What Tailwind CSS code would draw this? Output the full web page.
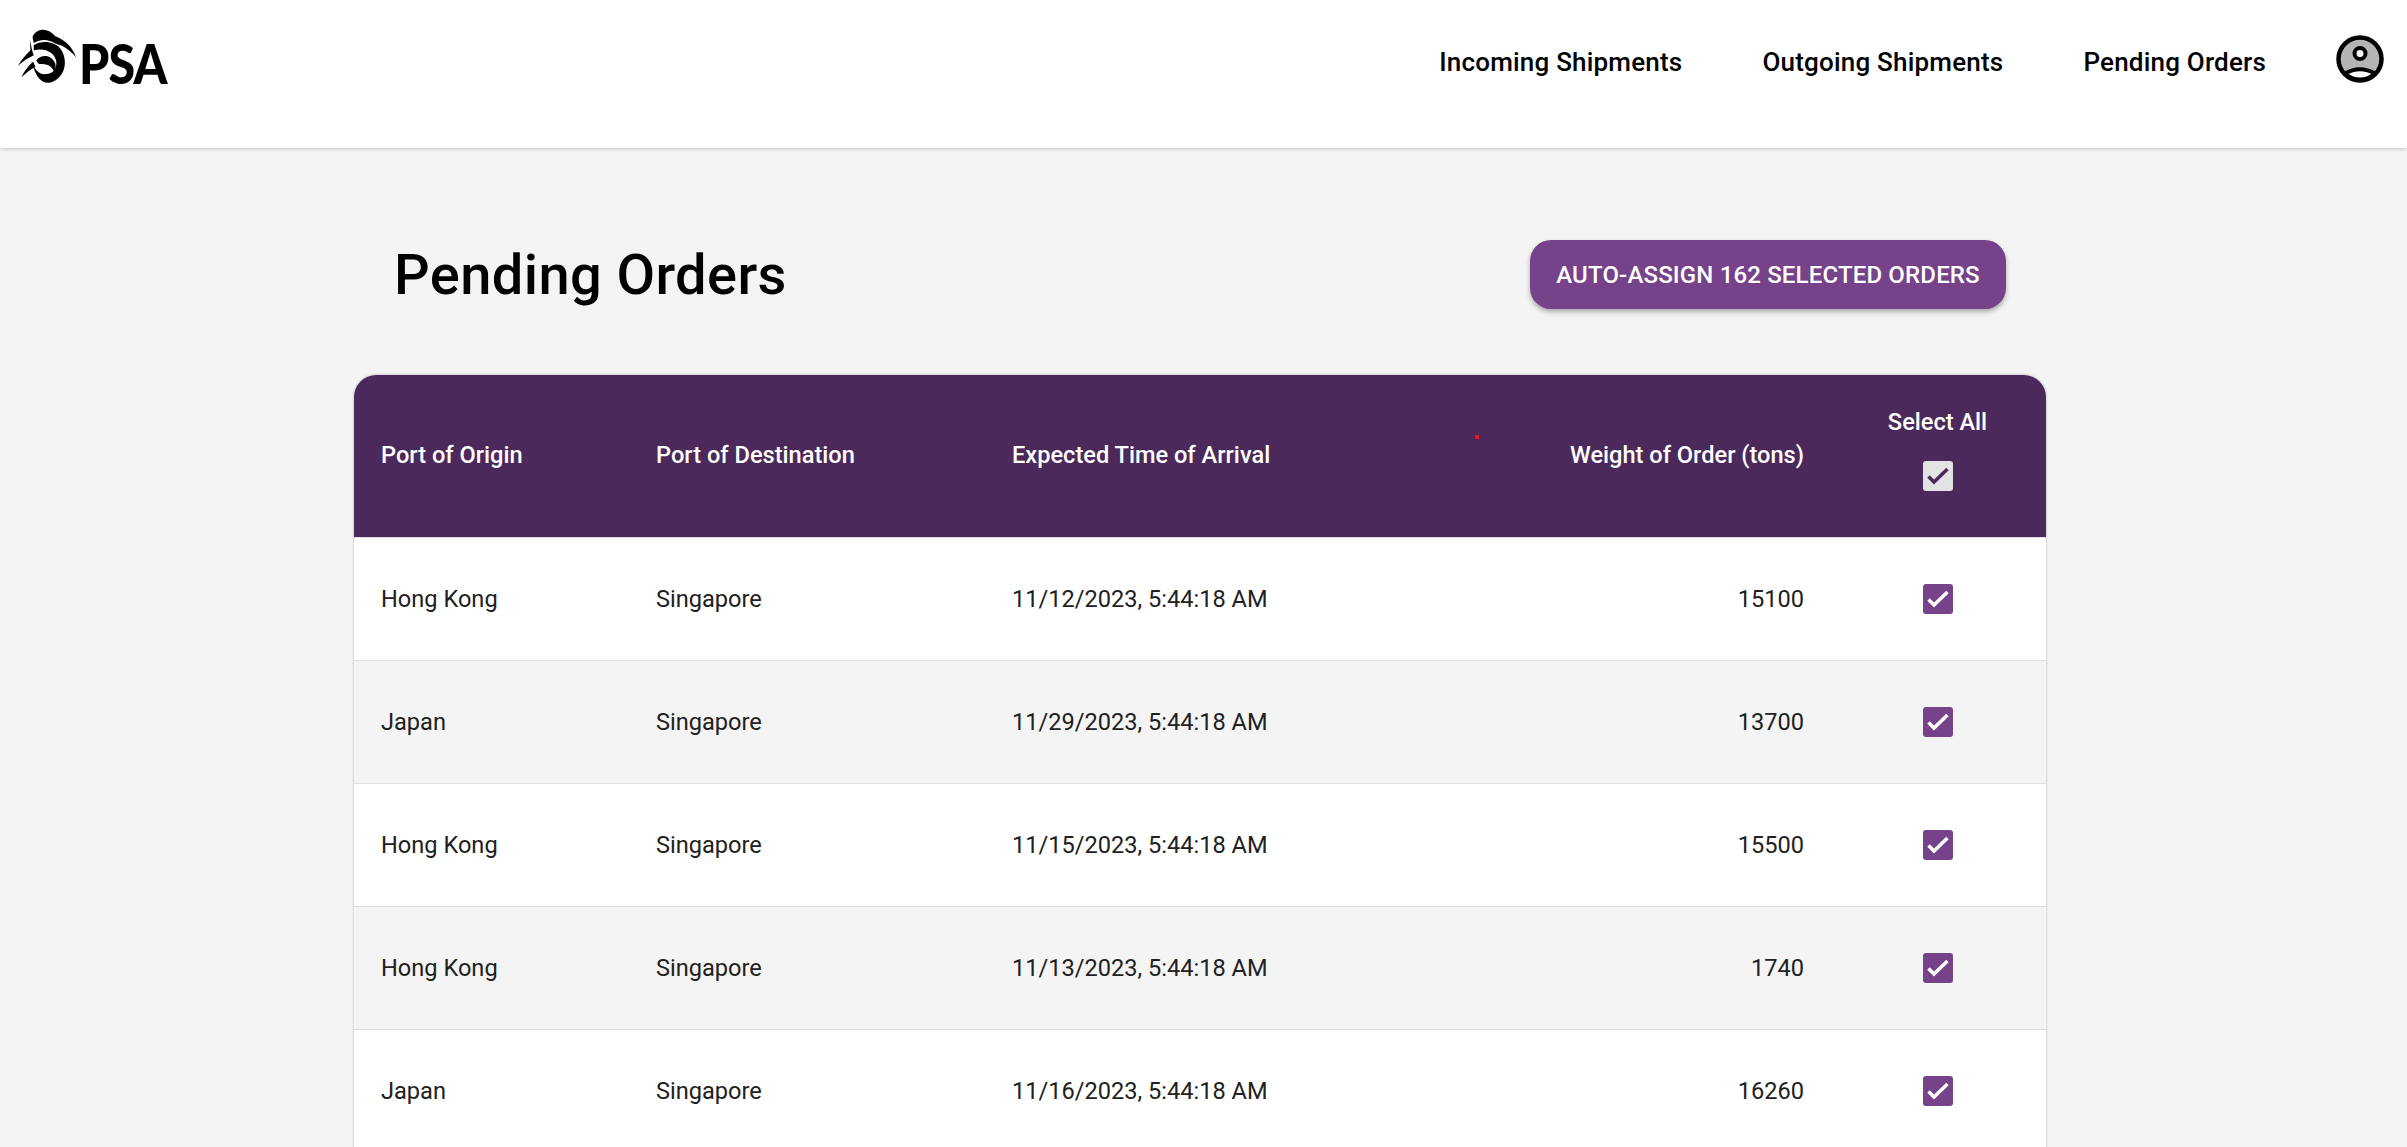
<!DOCTYPE html>
<html lang="en">
 <head>
  <meta charset="utf-8"/>
  <meta content="width=device-width, initial-scale=1.0" name="viewport"/>
  <title>Pending Orders</title>
  <script src="https://cdn.jsdelivr.net/npm/@tailwindcss/browser@4"></script>
 </head>
 <body class="h-screen overflow-hidden bg-[#f4f4f4] font-['Roboto',sans-serif] text-[#212121]">
  <!-- Top nav -->
  <header class="h-[148px] bg-white shadow-[0_1px_4px_rgba(0,0,0,0.2)] flex items-start justify-between relative">
   <div class="flex items-start pl-[17px] pt-[27px]">
    <svg class="w-[60px] h-[57px] shrink-0" viewBox="50 80 180 172" fill="#000">
     <path d="M97 108 C108 85 140 78 165 108 C190 118 215 135 228 172 C212 152 190 136 165 130 C145 116 120 116 100 128 C98 118 96 113 97 108 Z"/>
     <path d="M100 135 C125 118 165 125 180 145 C200 170 200 215 170 238 C150 255 125 250 112 230 C102 215 96 195 92 180 C100 205 115 225 138 222 C160 220 170 205 168 183 C163 158 138 142 100 150 Z"/>
     <path d="M108 180 C125 160 155 165 165 190 C167 200 166 210 162 218 C158 203 145 190 120 192 C115 192 110 187 108 180 Z"/>
     <path d="M52 198 C62 180 75 165 90 150 L88 118 L95 150 L100 165 C85 172 68 182 52 198 Z"/>
     <path d="M63 232 C70 215 85 195 98 185 L105 200 C90 208 75 220 63 232 Z"/>
    </svg>
    <span class="font-['Lato',sans-serif] font-black text-[55px] leading-none tracking-[-1px] text-black ml-[2px] mt-[9px] origin-left scale-x-[0.88]">PSA</span>
   </div>
   <nav class="flex items-start pr-[23px] pt-[35px]">
    <a class="text-[26px] leading-[54px] font-medium text-black tracking-[0.2px] mr-[80px]">Incoming Shipments</a>
    <a class="text-[26px] leading-[54px] font-medium text-black tracking-[0.2px] mr-[80px]">Outgoing Shipments</a>
    <a class="text-[26px] leading-[54px] font-medium text-black tracking-[0.2px] mr-[70px]">Pending Orders</a>
    <svg class="w-[48px] h-[48px]" viewBox="0 0 48 48">
     <circle cx="24" cy="24" r="21.5" fill="#b4b4b4"/>
     <path d="M9 38.5 Q24 30 39 38.5 A21.5 21.5 0 0 1 9 38.5 Z" fill="#fff" stroke="#000" stroke-width="4"/>
     <circle cx="24" cy="18.5" r="5.5" fill="#fff" stroke="#000" stroke-width="4"/>
     <circle cx="24" cy="24" r="21.5" fill="none" stroke="#000" stroke-width="4.5"/>
    </svg>
   </nav>
  </header>

  <main class="w-[1692px] ml-[354px]">
   <div class="flex items-center justify-between pl-[40px] pr-[40px] h-[227px] pt-[27px]">
    <h1 class="text-[56px] font-medium text-black leading-none tracking-[0.4px]">Pending Orders</h1>
    <button class="h-[69px] w-[476px] mb-[2px] pt-[2px] rounded-[21px] bg-[#76428a] text-white text-[24px] font-medium tracking-[0.16px] uppercase shadow-[0_3px_5px_rgba(0,0,0,0.3)]">Auto-assign 162 selected orders</button>
   </div>

   <div class="relative rounded-t-[22px] overflow-hidden bg-white shadow-[0_0_3px_rgba(0,0,0,0.25)]">
    <!-- stray red dot in the header -->
    <span class="absolute left-[1121px] top-[60px] w-[4px] h-[4px] bg-[#e8141e]"></span>
    <table class="w-full table-fixed text-[23.6px]">
     <colgroup>
      <col class="w-[302px]"/>
      <col class="w-[356px]"/>
      <col class="w-[400px]"/>
      <col class="w-[419px]"/>
      <col/>
     </colgroup>
     <thead class="bg-[#4c295b] text-white">
      <tr class="h-[162px] border-b border-[#e0dbe3]">
       <th class="pl-[27px] text-left font-medium">Port of Origin</th>
       <th class="text-left font-medium">Port of Destination</th>
       <th class="text-left font-medium">Expected Time of Arrival</th>
       <th class="pr-[27px] text-right font-medium">Weight of Order (tons)</th>
       <th class="pb-[14px] pr-[2px] font-medium">
        <div class="flex flex-col items-center gap-[26px]">
         <span class="leading-[26px] pt-[2px]">Select All</span>
         <span class="w-[30px] h-[30px] rounded-[3px] bg-[#e3e3e3] flex items-center justify-center">
          <svg class="w-[30px] h-[30px]" viewBox="0 0 30 30" fill="none" stroke="#4c295b" stroke-width="3.5"><path d="M5.5 15.5 L11 21 L24.5 8"/></svg>
         </span>
        </div>
       </th>
      </tr>
     </thead>
     <tbody class="[&_td:not(:last-child)]:pt-[2px]">
      <tr class="h-[123px] bg-white border-b border-[#e0e0e0]">
       <td class="pl-[27px]">Hong Kong</td><td>Singapore</td><td>11/12/2023, 5:44:18 AM</td><td class="pr-[27px] text-right">15100</td>
       <td class="pr-[2px]"><span class="mx-auto w-[30px] h-[30px] rounded-[3px] bg-[#76428a] flex items-center justify-center"><svg class="w-[30px] h-[30px]" viewBox="0 0 30 30" fill="none" stroke="#fff" stroke-width="3.5"><path d="M5.5 15.5 L11 21 L24.5 8"/></svg></span></td>
      </tr>
      <tr class="h-[123px] bg-[#f4f4f4] border-b border-[#e0e0e0]">
       <td class="pl-[27px]">Japan</td><td>Singapore</td><td>11/29/2023, 5:44:18 AM</td><td class="pr-[27px] text-right">13700</td>
       <td class="pr-[2px]"><span class="mx-auto w-[30px] h-[30px] rounded-[3px] bg-[#76428a] flex items-center justify-center"><svg class="w-[30px] h-[30px]" viewBox="0 0 30 30" fill="none" stroke="#fff" stroke-width="3.5"><path d="M5.5 15.5 L11 21 L24.5 8"/></svg></span></td>
      </tr>
      <tr class="h-[123px] bg-white border-b border-[#e0e0e0]">
       <td class="pl-[27px]">Hong Kong</td><td>Singapore</td><td>11/15/2023, 5:44:18 AM</td><td class="pr-[27px] text-right">15500</td>
       <td class="pr-[2px]"><span class="mx-auto w-[30px] h-[30px] rounded-[3px] bg-[#76428a] flex items-center justify-center"><svg class="w-[30px] h-[30px]" viewBox="0 0 30 30" fill="none" stroke="#fff" stroke-width="3.5"><path d="M5.5 15.5 L11 21 L24.5 8"/></svg></span></td>
      </tr>
      <tr class="h-[123px] bg-[#f4f4f4] border-b border-[#e0e0e0]">
       <td class="pl-[27px]">Hong Kong</td><td>Singapore</td><td>11/13/2023, 5:44:18 AM</td><td class="pr-[27px] text-right">1740</td>
       <td class="pr-[2px]"><span class="mx-auto w-[30px] h-[30px] rounded-[3px] bg-[#76428a] flex items-center justify-center"><svg class="w-[30px] h-[30px]" viewBox="0 0 30 30" fill="none" stroke="#fff" stroke-width="3.5"><path d="M5.5 15.5 L11 21 L24.5 8"/></svg></span></td>
      </tr>
      <tr class="h-[123px] bg-white border-b border-[#e0e0e0]">
       <td class="pl-[27px]">Japan</td><td>Singapore</td><td>11/16/2023, 5:44:18 AM</td><td class="pr-[27px] text-right">16260</td>
       <td class="pr-[2px]"><span class="mx-auto w-[30px] h-[30px] rounded-[3px] bg-[#76428a] flex items-center justify-center"><svg class="w-[30px] h-[30px]" viewBox="0 0 30 30" fill="none" stroke="#fff" stroke-width="3.5"><path d="M5.5 15.5 L11 21 L24.5 8"/></svg></span></td>
      </tr>
     </tbody>
    </table>
   </div>
  </main>
 </body>
</html>
